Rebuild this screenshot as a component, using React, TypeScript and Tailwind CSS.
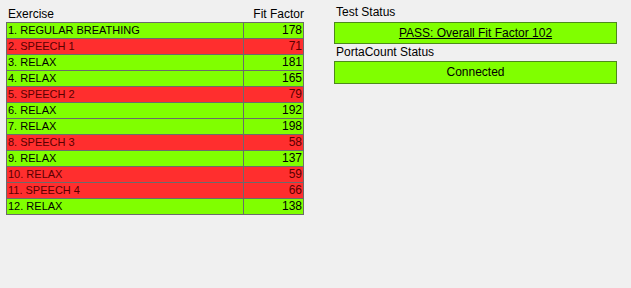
import React from "react";

const rows: [string, number, boolean][] = [
  ["1. REGULAR BREATHING", 178, true],
  ["2. SPEECH 1", 71, false],
  ["3. RELAX", 181, true],
  ["4. RELAX", 165, true],
  ["5. SPEECH 2", 79, false],
  ["6. RELAX", 192, true],
  ["7. RELAX", 198, true],
  ["8. SPEECH 3", 58, false],
  ["9. RELAX", 137, true],
  ["10. RELAX", 59, false],
  ["11. SPEECH 4", 66, false],
  ["12. RELAX", 138, true],
];

export default function App() {
  return (
    <div
      className="w-[631px] h-[288px] bg-[#f0f0f0] text-[11px] leading-[15px] text-black flex"
      style={{ fontFamily: '"Liberation Sans", Arial, sans-serif' }}
    >
      <div className="ml-[6px] mt-[7px] w-[298px] flex flex-col">
        <div className="flex h-[15px] items-center text-[12px]">
          <div className="flex-1 pl-[2px]">Exercise</div>
          <div className="pr-[0px]">Fit Factor</div>
        </div>
        <div className="border border-[#6b6b6b] border-b-0">
          {rows.map(([name, ff, ok]) => (
            <div
              key={name}
              className={`flex h-[16px] border-b border-[#6b6b6b] ${ok ? "bg-[#80ff00] text-black" : "bg-[#ff2e2e] text-[#5a0000]"}`}
            >
              <div className="w-[237px] pl-[1px] border-r border-[#6b6b6b] leading-[15px]">{name}</div>
              <div className="flex-1 text-right pr-[1px] leading-[15px] text-[12px]">{ff}</div>
            </div>
          ))}
        </div>
      </div>
      <div className="ml-[30px] mt-[5px] w-[283px] flex flex-col text-[12px]">
        <div className="pl-[2px] h-[17px] leading-[15px]">Test Status</div>
        <div className="h-[22px] border border-[#4d8a1c] bg-[#80ff00] flex items-center justify-center">
          <span className="underline">PASS: Overall Fit Factor 102</span>
        </div>
        <div className="pl-[2px] h-[16px] mt-[1px] leading-[15px]">PortaCount Status</div>
        <div className="h-[23px] border border-[#4d8a1c] bg-[#80ff00] flex items-center justify-center">
          <span>Connected</span>
        </div>
      </div>
    </div>
  );
}
